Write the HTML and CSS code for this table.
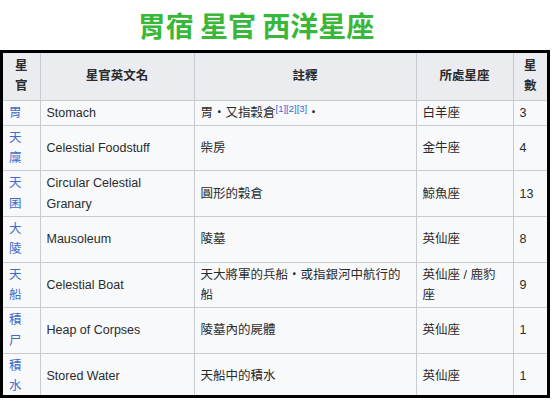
FILE: index.html
```html
<!DOCTYPE html>
<html lang="zh-Hant">
<head>
<meta charset="utf-8">
<title>胃宿 星官 西洋星座</title>
<link rel="stylesheet" href="styles.css">
</head>
<body>
<h1 class="title">胃宿 星官 西洋星座</h1>
<div class="frame">
  <table class="wikitable">
    <colgroup>
      <col class="c1"><col class="c2"><col class="c3"><col class="c4"><col class="c5">
    </colgroup>
    <thead>
      <tr class="head">
        <th>星官</th>
        <th>星官英文名</th>
        <th>註釋</th>
        <th>所處星座</th>
        <th>星數</th>
      </tr>
    </thead>
    <tbody>
      <tr class="short">
        <td><a class="lnk">胃</a></td>
        <td>Stomach</td>
        <td>胃・又指穀倉<sup class="ref">[1][2][3]</sup>・</td>
        <td>白羊座</td>
        <td>3</td>
      </tr>
      <tr>
        <td><a class="lnk">天廩</a></td>
        <td>Celestial Foodstuff</td>
        <td>柴房</td>
        <td>金牛座</td>
        <td>4</td>
      </tr>
      <tr>
        <td><a class="lnk">天囷</a></td>
        <td>Circular Celestial Granary</td>
        <td>圓形的穀倉</td>
        <td>鯨魚座</td>
        <td>13</td>
      </tr>
      <tr>
        <td><a class="lnk">大陵</a></td>
        <td>Mausoleum</td>
        <td>陵墓</td>
        <td>英仙座</td>
        <td>8</td>
      </tr>
      <tr>
        <td><a class="lnk">天船</a></td>
        <td>Celestial Boat</td>
        <td>天大將軍的兵船・或指銀河中航行的船</td>
        <td>英仙座 / 鹿豹座</td>
        <td>9</td>
      </tr>
      <tr>
        <td><a class="lnk">積尸</a></td>
        <td>Heap of Corpses</td>
        <td>陵墓內的屍體</td>
        <td>英仙座</td>
        <td>1</td>
      </tr>
      <tr>
        <td><a class="lnk">積水</a></td>
        <td>Stored Water</td>
        <td>天船中的積水</td>
        <td>英仙座</td>
        <td>1</td>
      </tr>
    </tbody>
  </table>
</div>
</body>
</html>
```
FILE: styles.css
```css
html, body {
  margin: 0;
  padding: 0;
  background: #ffffff;
}

body {
  font-family: "Liberation Sans", "Noto Sans CJK TC", sans-serif;
  width: 554px;
  height: 400px;
  overflow: hidden;
}

.title {
  margin: 0;
  padding: 8px 42px 0 0;
  height: 50px;
  box-sizing: border-box;
  text-align: center;
  font-family: "Noto Sans CJK TC", sans-serif;
  font-weight: 700;
  font-size: 28px;
  line-height: 34px;
  color: #38b738;
}

.frame {
  width: 550px;
  height: 348px;
  box-sizing: border-box;
  border: 3px solid #000000;
  overflow: hidden;
  background: #f8f9fa;
}

.wikitable {
  width: 544px;
  table-layout: fixed;
  border-collapse: collapse;
  font-size: 12.5px;
  line-height: 20.3px;
  color: #2a2b2c;
  background: #f8f9fa;
}

.c1 { width: 37px; }
.c2 { width: 154px; }
.c3 { width: 222px; }
.c4 { width: 97px; }
.c5 { width: 34px; }

.wikitable th,
.wikitable td {
  border: 1px solid #c8ccd1;
  padding: 2px 6px;
  vertical-align: middle;
}

.wikitable th {
  background: #eaecf0;
  font-weight: 700;
  text-align: center;
  padding-top: 3px;
  padding-bottom: 3px;
}

.wikitable tr:first-child th {
  border-top: none;
}

.wikitable tr th:first-child,
.wikitable tr td:first-child {
  border-left: none;
}

.wikitable tr th:last-child,
.wikitable tr td:last-child {
  border-right: none;
}

.wikitable td {
  text-align: left;
}

.lnk {
  color: #3f6bcc;
  text-decoration: none;
}

.ref {
  color: #3f6bcc;
  font-size: 9.5px;
  line-height: 1;
  vertical-align: 5px;
}
```
